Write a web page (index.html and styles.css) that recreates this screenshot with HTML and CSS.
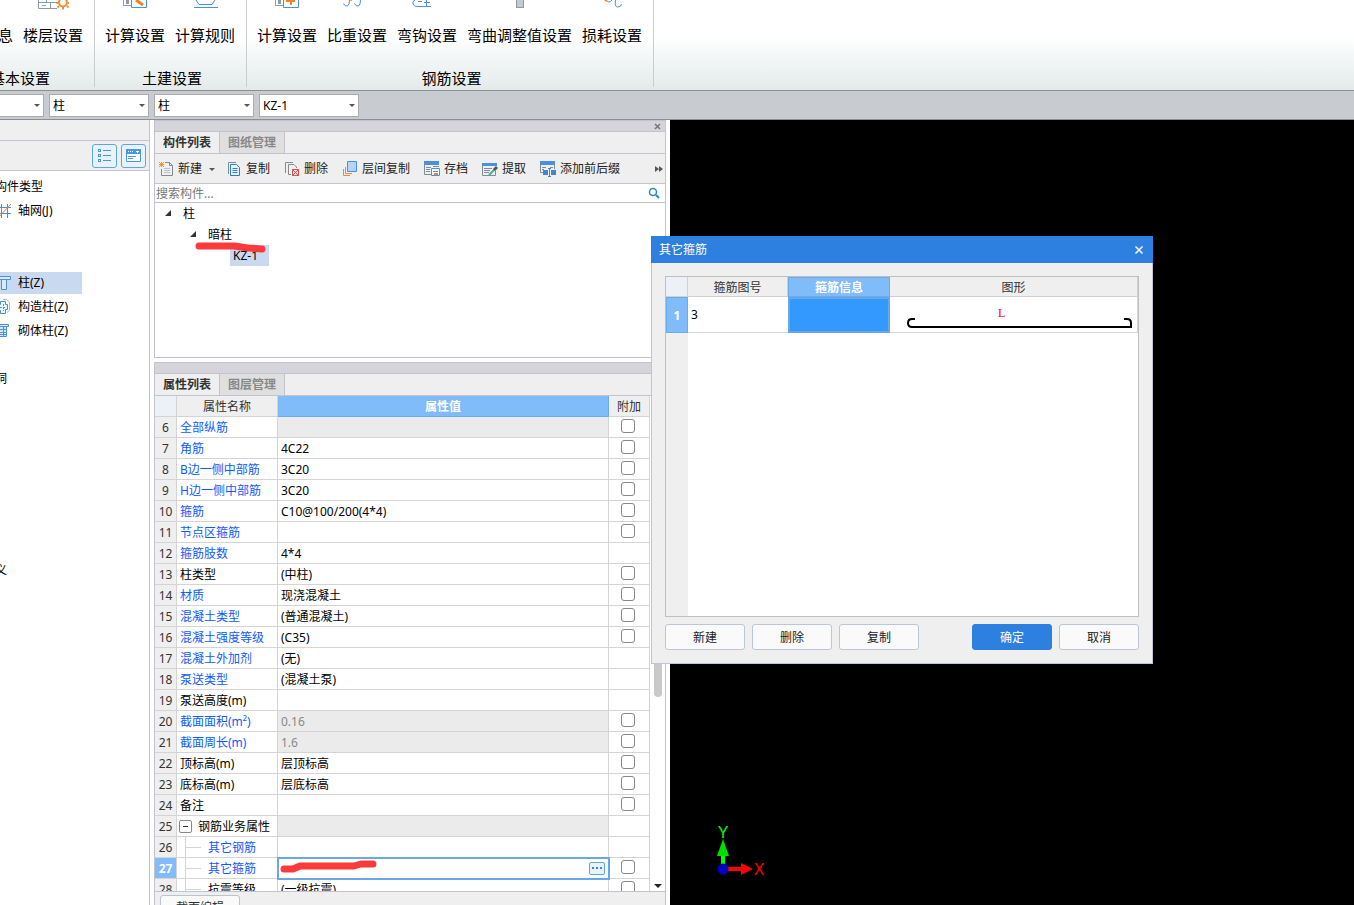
FILE: index.html
```html
<!DOCTYPE html>
<html lang="zh-CN">
<head>
<meta charset="utf-8">
<title>构件属性</title>
<link rel="stylesheet" href="styles.css">
</head>
<body>
<div class="app">
  <header class="ribbon">
    <section class="group">
      <div class="group-items">
        <button class="tool first"><svg width="32" height="10"></svg><span>息</span></button>
        <button class="tool"><svg width="32" height="10" fill="none" stroke="#8b9aa8"><path d="M1.500 0V8.500H20M1.500 2.500H20M9.500 0V3M13.500 2.500V8M5 5.500H9"/><circle cx="26" cy="2.500" r="4" stroke="#f0913a" stroke-width="2"/><path d="M22 6l-1.500 1.500M30 6l1.500 1.500M26 7v2.500M21 3h-1.500M31 3h1" stroke="#f0913a" stroke-width="2"/></svg><span>楼层设置</span></button>
      </div>
      <h2>基本设置</h2>
    </section>
    <section class="group">
      <div class="group-items">
        <button class="tool"><svg width="32" height="10" fill="none"><path d="M4.500 0V5.500H12" stroke="#8b9aa8"/><rect x="7" y="0" width="3" height="4" fill="#8b9aa8"/><path d="M12.500 0V7.500H27.500V0" stroke="#4a90e2"/><path d="M17 0l7 5" stroke="#f0812d" stroke-width="3"/></svg><span>计算设置</span></button>
        <button class="tool"><svg width="32" height="10" fill="none" stroke="#4a90e2"><path d="M7 0l3 4.500h13l3-4.500M5 7.500h24"/></svg><span>计算规则</span></button>
      </div>
      <h2>土建设置</h2>
    </section>
    <section class="group">
      <div class="group-items">
        <button class="tool"><svg width="32" height="10" fill="none"><path d="M4.500 0V5.500H12" stroke="#8b9aa8"/><rect x="7" y="0" width="3" height="4" fill="#8b9aa8"/><path d="M12.500 0V7.500H27.500V0" stroke="#4a90e2"/><path d="M15 1h9M20 0v5" stroke="#f0812d" stroke-width="2"/></svg><span>计算设置</span></button>
        <button class="tool"><svg width="32" height="10" fill="none" stroke="#4a90e2"><path d="M2.500 3.500q1 3 4 2.500 2-1 2-6M13.500 3.500q1 3 4 2.500 2-1 2-6"/><circle cx="10" cy="0" r="1" fill="#f0812d" stroke="none"/></svg><span>比重设置</span></button>
        <button class="tool"><svg width="32" height="10" fill="none" stroke="#4a90e2"><path d="M4 0Q1 1 2 4q1 3 5 2.500h13M7 1.500h4M13 2.500h6M15.500 0v6"/></svg><span>弯钩设置</span></button>
        <button class="tool"><svg width="32" height="10"><rect x="12.500" y="-4" width="7" height="11.500" fill="#c3cad0" stroke="#8b9aa8"/></svg><span>弯曲调整值设置</span></button>
        <button class="tool"><svg width="32" height="10" fill="none" stroke="#4a90e2"><path d="M10 0q3 4 6 0M19.500 0q-1 7 2 7 4 0 4-3"/><circle cx="10" cy="0" r="1.500" fill="#f0812d" stroke="none"/></svg><span>损耗设置</span></button>
      </div>
      <h2>钢筋设置</h2>
    </section>
  </header>

  <nav class="combos">
    <div class="combo short"><select aria-label="楼层"><option></option></select></div>
    <div class="combo"><select aria-label="构件大类"><option>柱</option></select></div>
    <div class="combo"><select aria-label="构件类型"><option>柱</option></select></div>
    <div class="combo"><select aria-label="构件"><option>KZ-1</option></select></div>
  </nav>

  <main class="work">
    <aside class="types">
      <div class="types-cap"></div>
      <div class="types-bar">
        <button class="view" aria-label="列表"><svg width="15" height="15" fill="none" stroke="#4a97ea"><rect x="1.500" y="1.500" width="2" height="2"/><rect x="1.500" y="6.500" width="2" height="2"/><rect x="1.500" y="11.500" width="2" height="2"/><path d="M6 2.500h8M6 7.500h8M6 12.500h8"/></svg></button>
        <button class="view" aria-label="窗口"><svg width="15" height="15"><path d="M.5 1.500h14v12H.5z" fill="#fff" stroke="#4a97ea"/><path d="M0 1h15v5H0z" fill="#4a97ea"/><path d="M2 3.500h1M4 3.500h1M6 3.500h1M10 3.500h3M11 4.500h1" stroke="#fff"/><path d="M2 8.500h8M2 10.500h5" stroke="#4a97ea"/></svg></button>
      </div>
      <ul class="types-list">
        <li>构件类型</li>
        <li><a href="#"><svg width="16" height="16" fill="none" stroke="#4a90d8"><path d="M6.500 1v14M12.500 1v14M0 4.500h16M0 10.500h16"/><path d="M3 15L16 1" stroke="#d8864a"/></svg>轴网(J)</a></li>
        <li></li>
        <li></li>
        <li class="on"><a href="#"><svg width="16" height="16" fill="#dcebfb" stroke="#4a90d8"><path d="M1 1.500h14.500v3H1zM6.500 4.500h5v10h-5z"/></svg>柱(Z)</a></li>
        <li><a href="#"><svg width="16" height="16" fill="none" stroke="#4a90d8"><path d="M5.500 2.500h5v3h2v5h-2v4h-5v-3h-2v-6h2z" fill="#eef6fe"/><path d="M8 .5h4l2.500 3v8l-2.500 2" stroke="#9bbfe6"/><path d="M5 8.500h6M8.500 5v7" stroke-dasharray="2 1"/></svg>构造柱(Z)</a></li>
        <li><a href="#"><svg width="16" height="16" fill="#dcebfb" stroke="#4a90d8"><path d="M1 1.500h12.500v2H1zM4.500 3.500h7v10h-7zM4 6.500h8M4 9.500h8M4 11.500h8M8.500 4v9"/></svg>砌体柱(Z)</a></li>
        <li></li>
        <li>洞</li>
        <li></li><li></li><li></li><li></li><li></li><li></li><li></li>
        <li>义</li>
      </ul>
    </aside>

    <div class="docks">
      <section class="dock components">
        <div class="dock-cap"><button class="x" aria-label="关闭"><svg width="7" height="7" stroke="#777" stroke-width="1.500"><path d="M1 1l5 5M6 1L1 6"/></svg></button></div>
        <div class="tabs"><button class="tab on">构件列表</button><button class="tab">图纸管理</button></div>
        <div class="toolbar">
          <button><svg width="16" height="16" fill="none" stroke="#7f8c96"><path d="M7 1.500h4.500l3 3v10h-11V8M11.500 1.500v3h3"/><path d="M6 7.500h6M6 9.500h6M6 11.500h6" stroke="#b9c2c9"/><path d="M1 1l5 5M6 1L1 6M3.500 1v5M1 3.500h5" stroke="#f39a2b"/></svg>新建<svg class="caret" width="6" height="4"><path d="M0 0h6L3 3z" fill="#555"/></svg></button>
          <button><svg width="16" height="16" fill="none"><path d="M2.500 13V1.500H10" stroke="#7f8c96"/><path d="M4.500 3.500h6l3 3v8h-9z" stroke="#2f7bd4" fill="#eaf3fd"/><path d="M6.500 7.500h5M6.500 9.500h5M6.500 11.500h5" stroke="#2f7bd4"/></svg>复制</button>
          <button><svg width="16" height="16" fill="none" stroke="#7f8c96"><path d="M1.500 12V1.500H9M7 13.500H4.500v-10H10l2.500 2.500v1"/><rect x="8.500" y="8.500" width="6" height="6" fill="#fbe3e3" stroke="#d9534f"/><path d="M9 9l5 5M14 9l-5 5" stroke="#d9534f"/></svg>删除</button>
          <button><svg width="16" height="16" fill="none"><path d="M1.500 8v6.500H8M3.500 6v6.500H10" stroke="#ef8632"/><path d="M5.500.5h9v10h-9z" fill="#b3d4fb" stroke="#4a90e2"/></svg>层间复制</button>
          <button><svg width="16" height="16" fill="none"><path d="M.5 3v10.500H7" stroke="#7f8c96"/><path d="M0 0h15v4H0z" fill="#4a90e2"/><path d="M2 6.500h5M2 8.500h4M2 10.500h4M9 5.500h6" stroke="#7f8c96"/><path d="M7.500 7.500h8v7h-8z" fill="#fff" stroke="#4a90e2"/><path d="M9 10.500h5" stroke="#4a90e2"/><path d="M10 12h4v2h-4z" fill="#f0812d"/></svg>存档</button>
          <button><svg width="16" height="16" fill="none"><path d="M.5 3v11.500h13V10" stroke="#7f8c96"/><path d="M0 2h15v3H0z" fill="#4a90e2"/><path d="M2 7.500h8M2 9.500h6M2 11.500h5" stroke="#7f8c96"/><path d="M7 14l6-6" stroke="#37b3a8" stroke-width="2"/><path d="M12 9l3-3" stroke="#555" stroke-width="3"/></svg>提取</button>
          <button><svg width="16" height="16" fill="none"><path d="M.5 3v8.500H3M14.500 3v5" stroke="#7f8c96"/><path d="M0 0h15v4H0z" fill="#4a90e2"/><path d="M2 6.500h4M2 8.500h2M10 6.500h3" stroke="#7f8c96"/><path d="M3 9h5v5H3zM11 9h5v5h-5z" fill="#3f86d8"/><path d="M8 7.500h3M9.500 8v8M8 15.500h3" stroke="#3f86d8"/></svg>添加前后缀</button>
          <button class="more" aria-label="更多"><svg width="8" height="6" fill="#555"><path d="M0 0l4 3-4 3zM4 0l4 3-4 3z"/></svg></button>
        </div>
        <div class="search">
          <input type="text" aria-label="搜索构件" placeholder="搜索构件...">
          <svg width="12" height="12" fill="none" stroke="#2d86c9"><circle cx="5" cy="5" r="3.500" stroke-width="1.500"/><path d="M8 8l3 3" stroke-width="2"/></svg>
        </div>
        <ul class="tree">
          <li class="lv1"><svg width="7" height="7"><path d="M6 0v6H0z" fill="#333"/></svg><span>柱</span></li>
          <li class="lv2"><svg width="7" height="7"><path d="M6 0v6H0z" fill="#333"/></svg><span>暗柱</span></li>
          <li class="lv3"><span class="picked">KZ-1</span></li>
        </ul>
        <svg class="mark mark-tree" width="74" height="12"><path d="M4 4h35l14 2 14 1" /></svg>
      </section>

      <section class="dock props">
        <div class="dock-cap"></div>
        <div class="tabs"><button class="tab on">属性列表</button><button class="tab">图层管理</button></div>
        <div class="grid-wrap">
          <table class="grid">
            <thead><tr><th class="c-no"></th><th class="c-name">属性名称</th><th class="c-val">属性值</th><th class="c-add">附加</th></tr></thead>
            <tbody>
              <tr><th>6</th><td class="link">全部纵筋</td><td class="off"></td><td><input type="checkbox" aria-label="附加 全部纵筋"></td></tr>
              <tr><th>7</th><td class="link">角筋</td><td>4C22</td><td><input type="checkbox" aria-label="附加 角筋"></td></tr>
              <tr><th>8</th><td class="link">B边一侧中部筋</td><td>3C20</td><td><input type="checkbox" aria-label="附加 B边一侧中部筋"></td></tr>
              <tr><th>9</th><td class="link">H边一侧中部筋</td><td>3C20</td><td><input type="checkbox" aria-label="附加 H边一侧中部筋"></td></tr>
              <tr><th>10</th><td class="link">箍筋</td><td>C10@100/200(4*4)</td><td><input type="checkbox" aria-label="附加 箍筋"></td></tr>
              <tr><th>11</th><td class="link">节点区箍筋</td><td></td><td><input type="checkbox" aria-label="附加 节点区箍筋"></td></tr>
              <tr><th>12</th><td class="link">箍筋肢数</td><td>4*4</td><td></td></tr>
              <tr><th>13</th><td>柱类型</td><td>(中柱)</td><td><input type="checkbox" aria-label="附加 柱类型"></td></tr>
              <tr><th>14</th><td class="link">材质</td><td>现浇混凝土</td><td><input type="checkbox" aria-label="附加 材质"></td></tr>
              <tr><th>15</th><td class="link">混凝土类型</td><td>(普通混凝土)</td><td><input type="checkbox" aria-label="附加 混凝土类型"></td></tr>
              <tr><th>16</th><td class="link">混凝土强度等级</td><td>(C35)</td><td><input type="checkbox" aria-label="附加 混凝土强度等级"></td></tr>
              <tr><th>17</th><td class="link">混凝土外加剂</td><td>(无)</td><td></td></tr>
              <tr><th>18</th><td class="link">泵送类型</td><td>(混凝土泵)</td><td></td></tr>
              <tr><th>19</th><td>泵送高度(m)</td><td></td><td></td></tr>
              <tr><th>20</th><td class="link">截面面积(m²)</td><td class="off">0.16</td><td><input type="checkbox" aria-label="附加 截面面积"></td></tr>
              <tr><th>21</th><td class="link">截面周长(m)</td><td class="off">1.6</td><td><input type="checkbox" aria-label="附加 截面周长"></td></tr>
              <tr><th>22</th><td>顶标高(m)</td><td>层顶标高</td><td><input type="checkbox" aria-label="附加 顶标高"></td></tr>
              <tr><th>23</th><td>底标高(m)</td><td>层底标高</td><td><input type="checkbox" aria-label="附加 底标高"></td></tr>
              <tr><th>24</th><td>备注</td><td></td><td><input type="checkbox" aria-label="附加 备注"></td></tr>
              <tr><th>25</th><td class="parent"><div><button class="fold" aria-label="折叠"></button>钢筋业务属性</div></td><td class="off"></td><td></td></tr>
              <tr><th>26</th><td class="link child">其它钢筋</td><td></td><td></td></tr>
              <tr class="current"><th>27</th><td class="link child">其它箍筋</td><td class="edit"><div><svg class="mark mark-cell" width="100" height="14"><path d="M5 10h9l7-3h54l7-2h12"/></svg><button class="dots" aria-label="编辑其它箍筋"><svg width="10" height="2" fill="#3f86d8"><path d="M0 0h2v2H0zM4 0h2v2H4zM8 0h2v2H8z"/></svg></button></div></td><td><input type="checkbox" aria-label="附加 其它箍筋"></td></tr>
              <tr><th>28</th><td class="child">抗震等级</td><td>(一级抗震)</td><td><input type="checkbox" aria-label="附加 抗震等级"></td></tr>
            </tbody>
          </table>
          <div class="scroll"><div class="thumb"></div><svg width="8" height="5"><path d="M0 0h8L4 4z" fill="#222"/></svg></div>
        </div>
        <footer class="props-foot"><button>截面编辑</button></footer>
      </section>
    </div>

    <section class="canvas">
      <svg class="axis" width="60" height="56">
        <path d="M13 44V26" stroke="#0f0" stroke-width="4"/><path d="M7 31l6-17 6 17z" fill="#0d0"/>
        <path d="M13 44h20" stroke="#f00" stroke-width="4"/><path d="M31 38l12 6-12 6z" fill="#f00"/>
        <circle cx="13" cy="44" r="5.500" fill="#0000c0"/>
        <text x="13" y="13" fill="#0f0">Y</text><text x="49" y="50" fill="#f00">X</text>
      </svg>
    </section>
  </main>
</div>

<div class="dialog" role="dialog" aria-labelledby="dlg-title">
  <header><h1 id="dlg-title">其它箍筋</h1><button aria-label="关闭"><svg width="8" height="8" stroke="#fff" stroke-width="1.500"><path d="M.5.5l7 7M7.500.5l-7 7"/></svg></button></header>
  <div class="dialog-body">
    <div class="sheet">
      <table>
        <thead><tr><th class="d-no"></th><th class="d-id">箍筋图号</th><th class="d-info">箍筋信息</th><th>图形</th></tr></thead>
        <tbody><tr><th>1</th><td>3</td><td class="sel"></td><td class="shape"><svg width="230" height="34" viewBox="0 0 230 34"><path d="M10 21H7q-4 0-4 4t4 4h219V25q0-4-4-4h-3" fill="none" stroke="#000" stroke-width="2"/><text x="93" y="19">L</text></svg></td></tr></tbody>
      </table>
    </div>
    <div class="dialog-actions">
      <button>新建</button><button>删除</button><button>复制</button><button class="primary">确定</button><button>取消</button>
    </div>
  </div>
</div>
</body>
</html>
```
FILE: styles.css
```css
* { box-sizing: border-box; }
body {
  margin: 0;
  background: #fff;
  color: #000;
  font: 12px/20px "Noto Sans", "Noto Sans CJK SC", sans-serif;
}
button, input, select { font: inherit; color: inherit; margin: 0; padding: 0; }
button { border: 0; background: none; white-space: nowrap; }
ul { margin: 0; padding: 0; list-style: none; }
h1, h2 { margin: 0; font: inherit; }
a { color: inherit; text-decoration: none; }
svg { display: block; flex: none; }
table { border-collapse: separate; border-spacing: 0; table-layout: fixed; }
th, td { padding: 0; font-weight: normal; }

.app { display: flex; flex-direction: column; height: 100vh; overflow: hidden; }

/* ribbon */
.ribbon {
  flex: none;
  display: flex;
  height: 91px;
  overflow: hidden;
  border-bottom: 1px solid #8b9094;
  background: linear-gradient(#fff 40%, #e4eaea);
  font-size: 15px;
}
.group {
  flex: none;
  display: flex;
  flex-direction: column;
  justify-content: space-between;
  margin-bottom: 3px;
  padding: 0 6px 0 5px;
  border-right: 1px solid #c9cdcf;
  text-align: center;
}
.group:first-child { margin-left: -57px; }
.group h2 { padding-left: 4px; line-height: 18px; }
.group-items { display: flex; }
.tool { display: flex; flex-direction: column; align-items: center; gap: 15px; padding: 0 5px; }
.tool.first span { width: 60px; text-align: right; }

/* selector row */
.combos {
  flex: none;
  display: flex;
  gap: 5px;
  height: 29px;
  padding: 3px 0 2px;
  border-bottom: 1px solid #8b9094;
  background: #c8cbd0;
}
.combo { position: relative; width: 100px; }
.combo.short { width: 44px; }
.combo select {
  display: block;
  width: 100%;
  height: 23px;
  padding-left: 3px;
  border: 1px solid #a9abae;
  border-radius: 0;
  background: #fff;
  appearance: none;
}
.combo.short select { border-left: 0; }
.combo::after {
  content: "";
  position: absolute;
  top: 10px;
  right: 4px;
  border: 3px solid transparent;
  border-top-color: #555;
  border-bottom: 0;
}

.work { flex: 1; display: flex; min-height: 0; }

/* component types */
.types { flex: none; width: 150px; overflow: hidden; border-right: 1px solid #c2c3cc; }
.types-cap { height: 21px; border-bottom: 1px solid #c2c3cc; background: #efefef; }
.types-bar {
  display: flex;
  align-items: center;
  justify-content: flex-end;
  gap: 4px;
  height: 30px;
  padding-right: 3px;
  border-bottom: 1px solid #c2c3cc;
  background: #efefef;
}
.view {
  display: flex;
  align-items: center;
  justify-content: center;
  width: 25px;
  height: 24px;
  border: 1px solid #5ba4ee;
  border-radius: 3px;
  background: #e9f3fd;
}
.types-list { margin-left: -5px; padding-top: 4px; }
.types-list li { height: 24px; padding: 1px 0; line-height: 22px; }
.types-list a { display: flex; align-items: center; gap: 7px; width: 87px; }
.types-list .on a { background: #c9d9f0; }

/* docked panels */
.docks { flex: none; display: flex; flex-direction: column; gap: 4px; width: 512px; margin-left: 4px; }
.dock { position: relative; border: 1px solid #c2c3cc; }
.dock-cap {
  display: flex;
  align-items: center;
  justify-content: flex-end;
  height: 11px;
  padding-right: 4px;
  border-bottom: 1px solid #c2c3cc;
  background: #d4d4da;
}
.tabs { display: flex; height: 22px; border-bottom: 1px solid #c2c3cc; background: #efefef; }
.tab { width: 65px; border-right: 1px solid #c2c3cc; background: #dfdfdf; color: #888; font-weight: bold; }
.tab.on { background: #efefef; color: #333; }

.components { flex: none; height: 238px; }
.toolbar {
  display: flex;
  align-items: center;
  gap: 14px;
  height: 30px;
  padding: 0 2px 0 3px;
  border-bottom: 1px solid #c2c3cc;
  background: #efefef;
  color: #222;
}
.toolbar button { display: flex; align-items: center; gap: 4px; }
.toolbar .caret { margin: 2px -3px 0 3px; }
.toolbar .more { margin-left: auto; }
.search { display: flex; align-items: center; height: 19px; padding-right: 5px; border-bottom: 1px solid #c2c3cc; }
.search input { flex: 1; min-width: 0; height: 18px; padding: 2px 0 0 1px; border: 0; outline: 0; }
.search input::placeholder { color: #777; }
.tree li { display: flex; align-items: center; height: 21px; }
.tree svg { margin-right: 11px; }
.lv1 { padding-left: 10px; }
.lv2 { padding-left: 35px; }
.lv3 { padding-left: 75px; }
.picked { width: 39px; padding-left: 3px; background: #c9d9f0; line-height: 21px; }

.mark { fill: none; stroke: #fb3b3b; stroke-width: 7; stroke-linecap: round; stroke-linejoin: round; }
.mark-tree { position: absolute; left: 40px; top: 121px; }

/* property grid */
.props { flex: 1; display: flex; flex-direction: column; min-height: 0; border-bottom: 0; }
.props .dock-cap, .props .tabs { flex: none; }
.grid-wrap { flex: 1; display: flex; min-height: 0; overflow: hidden; border-bottom: 1px solid #c2c3cc; }
.grid { width: 495px; height: max-content; }
.grid th, .grid td {
  height: 21px;
  padding-top: 2px;
  border-right: 1px solid #d4d4d4;
  border-bottom: 1px solid #d4d4d4;
  line-height: 18px;
  white-space: nowrap;
}
.grid th { background: #efefef; color: #333; }
.grid td { padding-left: 3px; }
.grid .c-no { width: 22px; background: #ecf1f8; }
.grid .c-name { width: 101px; }
.grid .c-val { border-color: #6aabec; background: #80bbfa; color: #fff; font-weight: bold; }
.grid .c-add { width: 41px; }
.grid .link { color: #0f5bff; }
.grid .off { background: #ebebeb; color: #888; }
.grid td:last-child { padding: 0; text-align: center; }
.grid input {
  display: block;
  width: 14px;
  height: 14px;
  margin: 0 auto 2px 12px;
  border: 1px solid #888;
  border-radius: 3px;
  background: #fff;
  appearance: none;
}
.grid .parent { padding-left: 2px; }
.parent div { display: flex; align-items: center; gap: 6px; }
.fold {
  display: flex;
  align-items: center;
  justify-content: center;
  width: 13px;
  height: 13px;
  margin-bottom: 2px;
  border: 1px solid #888;
  border-radius: 2px;
}
.fold::before { content: ""; width: 5px; height: 1px; background: #333; }
.grid .child {
  padding-left: 31px;
  background:
    linear-gradient(#d4d4d4, #d4d4d4) 8px 0 / 1px 100% no-repeat,
    linear-gradient(#d4d4d4, #d4d4d4) 8px 10px / 16px 1px no-repeat;
}
.current th { background: #80bbfa; color: #fff; font-weight: bold; }
.grid .edit { padding: 0; outline: 2px solid #6aa7e8; outline-offset: -1px; }
.edit div { display: flex; align-items: center; justify-content: space-between; padding-right: 3px; }
.mark-cell { margin: 0 0 4px 1px; }
.dots {
  display: flex;
  align-items: center;
  justify-content: center;
  width: 16px;
  height: 13px;
  border: 1px solid #5ba4ee;
  border-radius: 2px;
  background: #e9f3fd;
}
.scroll { flex: 1; display: flex; flex-direction: column; justify-content: space-between; align-items: center; padding-bottom: 2px; }
.thumb { width: 8px; height: 301px; border-radius: 4px; background: #c9c9c9; }
.props-foot { flex: none; height: 13px; padding: 3px 5px 0; overflow: hidden; background: #efefef; }
.props-foot button { width: 80px; height: 26px; border: 1px solid #bcc3cf; border-radius: 3px; background: #fafafa; color: #333; }

/* drawing area */
.canvas { position: relative; flex: 1; margin-left: 4px; background: #000; }
.axis { position: absolute; left: 40px; bottom: 24px; font: 16px "Liberation Sans", sans-serif; text-anchor: middle; }

/* dialog */
.dialog {
  position: absolute;
  left: 651px;
  top: 236px;
  width: 502px;
  border: 1px solid #bcc6d4;
  border-top: 0;
  background: #efefef;
}
.dialog > header {
  display: flex;
  align-items: center;
  justify-content: space-between;
  height: 27px;
  margin: 0 -1px;
  padding: 0 10px 0 8px;
  background: #2d7fe0;
  color: #fff;
}
.dialog-body { padding: 13px; }
.sheet {
  height: 341px;
  border: 1px solid #bfbfbf;
  background: linear-gradient(#efefef, #efefef) 0 0 / 22px 100% no-repeat, #fff;
}
.sheet table { width: 100%; }
.sheet th { height: 20px; padding-top: 2px; border-right: 1px solid #d0d0d0; border-bottom: 1px solid #d0d0d0; background: #efefef; color: #333; line-height: 17px; }
.sheet .d-no { width: 22px; background: #ecf0f7; }
.sheet .d-id { width: 100px; }
.sheet .d-info { width: 102px; border: 1px solid #6aabec; background: #80bbfa; color: #fff; font-weight: bold; line-height: 16px; }
.sheet tbody th { height: 36px; padding: 0; border: 1px solid #6aabec; background: #80bbfa; color: #fff; font-weight: bold; }
.sheet td { height: 36px; padding-left: 3px; border-bottom: 1px solid #d4d4d4; }
.sheet .sel { border: 2px solid #6aa7e0; background: #3399ff; }
.sheet .shape { padding: 0 3px 0 15px; border-right: 1px solid #d4d4d4; }
.shape text { fill: #f00; font: 12px "Liberation Serif", serif; }
.dialog-actions { display: flex; gap: 7px; padding-top: 7px; }
.dialog-actions button { width: 80px; height: 26px; padding-top: 2px; border: 1px solid #bcc6d8; border-radius: 3px; background: #fafafa; color: #222; }
.dialog-actions .primary { margin-left: auto; border-color: #2d7fe0; background: #2d7fe0; color: #fff; }
```
